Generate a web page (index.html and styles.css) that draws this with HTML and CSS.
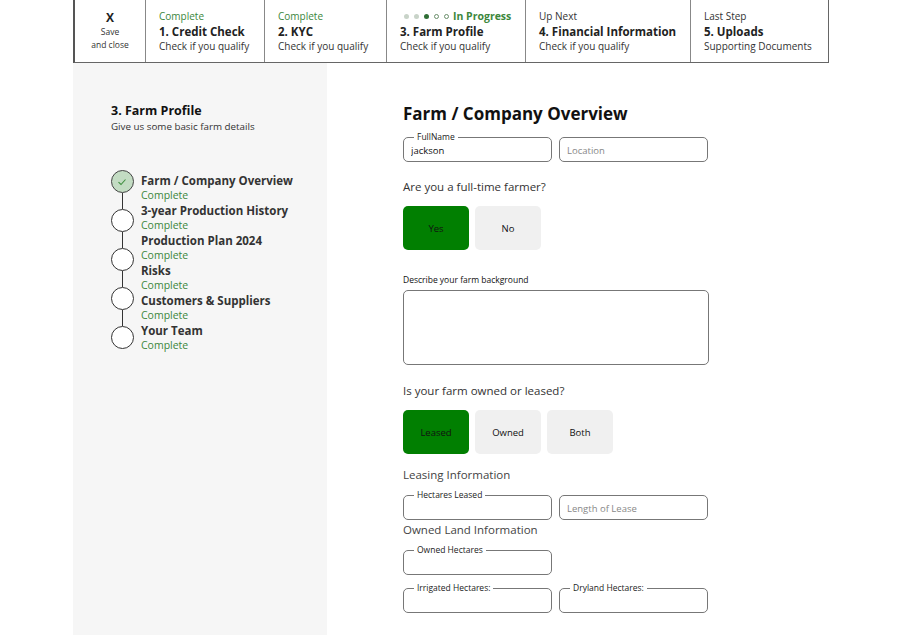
FILE: index.html
```html
<!DOCTYPE html>
<html>
<head>
<meta charset="utf-8">
<link rel="stylesheet" href="styles.css">
</head>
<body>
<div class="page">
  <header class="steps">
    <div class="cell close">
      <div class="x">X</div>
      <div class="save">Save<br>and close</div>
    </div>
    <div class="cell">
      <div class="status done">Complete</div>
      <div class="title">1. Credit Check</div>
      <div class="sub">Check if you qualify</div>
    </div>
    <div class="cell">
      <div class="status done">Complete</div>
      <div class="title">2. KYC</div>
      <div class="sub">Check if you qualify</div>
    </div>
    <div class="cell">
      <div class="status progress">
        <span class="dot light"></span><span class="dot light"></span><span class="dot dark"></span><span class="dot hollow"></span><span class="dot hollow"></span>
        <span class="ptext">In Progress</span>
      </div>
      <div class="title">3. Farm Profile</div>
      <div class="sub">Check if you qualify</div>
    </div>
    <div class="cell">
      <div class="status">Up Next</div>
      <div class="title">4. Financial Information</div>
      <div class="sub">Check if you qualify</div>
    </div>
    <div class="cell">
      <div class="status">Last Step</div>
      <div class="title">5. Uploads</div>
      <div class="sub">Supporting Documents</div>
    </div>
  </header>

  <div class="body">
    <aside class="side">
      <h2 class="side-title">3. Farm Profile</h2>
      <p class="side-sub">Give us some basic farm details</p>
      <div class="tracker">
        <div class="circles">
          <div class="circ checked">
            <svg width="12" height="12" viewBox="0 0 12 12"><path d="M2.5 6.2 L5 8.5 L9.5 3.5" fill="none" stroke="#3f8f3f" stroke-width="1.1"/></svg>
          </div>
          <div class="line"></div>
          <div class="circ"></div>
          <div class="line"></div>
          <div class="circ"></div>
          <div class="line"></div>
          <div class="circ"></div>
          <div class="line"></div>
          <div class="circ"></div>
        </div>
        <ul class="items">
          <li><span class="it">Farm / Company Overview</span><span class="ic">Complete</span></li>
          <li><span class="it">3-year Production History</span><span class="ic">Complete</span></li>
          <li><span class="it">Production Plan 2024</span><span class="ic">Complete</span></li>
          <li><span class="it">Risks</span><span class="ic">Complete</span></li>
          <li><span class="it">Customers &amp; Suppliers</span><span class="ic">Complete</span></li>
          <li><span class="it">Your Team</span><span class="ic">Complete</span></li>
        </ul>
      </div>
    </aside>

    <main class="main">
      <h1 class="main-title">Farm / Company Overview</h1>
      <div class="row">
        <fieldset class="fs"><legend>FullName</legend><input class="in" value="jackson"></fieldset>
        <div class="plain"><input class="in" placeholder="Location"></div>
      </div>

      <p class="q q1">Are you a full-time farmer?</p>
      <div class="btns">
        <button class="opt on">Yes</button>
        <button class="opt">No</button>
      </div>

      <label class="lbl">Describe your farm background</label>
      <textarea class="ta"></textarea>

      <p class="q q2">Is your farm owned or leased?</p>
      <div class="btns">
        <button class="opt on">Leased</button>
        <button class="opt">Owned</button>
        <button class="opt">Both</button>
      </div>

      <p class="sec">Leasing Information</p>
      <div class="row">
        <fieldset class="fs"><legend>Hectares Leased</legend><input class="in"></fieldset>
        <div class="plain"><input class="in" placeholder="Length of Lease"></div>
      </div>

      <p class="sec sec2">Owned Land Information</p>
      <div class="row">
        <fieldset class="fs"><legend>Owned Hectares</legend><input class="in"></fieldset>
      </div>
      <div class="row row-last">
        <fieldset class="fs"><legend>Irrigated Hectares:</legend><input class="in"></fieldset>
        <fieldset class="fs"><legend>Dryland Hectares:</legend><input class="in"></fieldset>
      </div>
    </main>
  </div>
</div>
</body>
</html>
```

FILE: styles.css
```css
* { box-sizing: border-box; }
html, body { margin: 0; padding: 0; background: #fff; }
body {
  font-family: "Open Sans", "Noto Sans", sans-serif;
  color: #222;
}
.page {
  width: 756px;
  margin-left: 73px;
}
.steps {
  display: grid;
  grid-template-columns: 70px 119px 122px 139px 165px 1fr;
  height: 63px;
  border: 1px solid #666;
  border-top: none;
  border-left: 2px solid #555;
}
.cell {
  border-left: 1px solid #888;
  padding: 9px 0 0 13px;
  white-space: nowrap;
}
.cell.close {
  border-left: none;
  padding: 10px 0 0 0;
  text-align: center;
}
.x { font-weight: 700; font-size: 12px; line-height: 15px; }
.save { font-size: 8.5px; line-height: 13px; color: #333; }
.status { font-size: 10px; line-height: 15px; color: #333; height: 15px; }
.status.done { color: #3c873c; }
.title { font-weight: 700; font-size: 11.5px; line-height: 15px; color: #222; }
.sub { font-size: 10px; line-height: 15px; color: #333; }
.progress { display: flex; align-items: center; margin-left: 4px; }
.dot {
  width: 5px; height: 5px; border-radius: 50%;
  margin-right: 5px; display: inline-block;
}
.dot.light { background: #c8d3c8; }
.dot.dark { background: #2f6e35; }
.dot.hollow { border: 1px solid #6a8e6a; background: #fff; }
.ptext { font-weight: 700; color: #3c873c; font-size: 10.5px; margin-left: -1px; }

.body { display: flex; }
.side {
  width: 254px;
  min-height: 572px;
  background: #f6f6f6;
  padding: 40px 0 0 38px;
}
.side-title { margin: 0; font-size: 12.5px; line-height: 16px; font-weight: 700; color: #111; }
.side-sub { margin: 1px 0 0; font-size: 9.8px; line-height: 13px; color: #333; }
.tracker { display: flex; margin-top: 40px; }
.circles { display: flex; flex-direction: column; align-items: center; width: 22px; margin-top: -3px; }
.circ {
  width: 23px; height: 23px; border-radius: 50%;
  border: 1px solid #333; background: #fff;
  display: flex; align-items: center; justify-content: center;
}
.circ.checked { background: #c3dcc3; border-color: #444; }
.line { width: 1px; height: 16px; background: #333; }
.items { list-style: none; margin: 0 0 0 8px; padding: 0; }
.items li { display: flex; flex-direction: column; height: 30px; }
.it { font-weight: 700; font-size: 11.5px; line-height: 15px; color: #333; }
.ic { font-size: 10.5px; line-height: 14px; color: #3c873c; }

.main { padding: 39px 0 0 76px; width: 502px; }
.main-title { margin: 0; font-size: 17px; line-height: 24px; font-weight: 700; color: #111; }
.row { display: flex; gap: 7px; margin-top: 6px; }
.fs {
  margin: 0; padding: 0 7px;
  width: 149px; height: 30px;
  border: 1px solid #777; border-radius: 5px;
  min-width: 0;
}
.fs legend {
  font-size: 8.5px; line-height: 10px; padding: 0 3px; margin-left: 3px; color: #222;
}
.plain {
  width: 149px; height: 25px; margin-top: 5px;
  border: 1px solid #777; border-radius: 5px;
  padding: 0 7px; display: flex; align-items: center;
}
.in {
  border: none; outline: none; background: transparent;
  font-family: inherit; font-size: 9.5px; color: #111;
  width: 100%; padding: 0; height: 16px; margin-top: 0; display: block;
}
.plain .in { margin-top: 1px; }
.in::placeholder { color: #888; }
.q { margin: 17px 0 0; font-size: 11.5px; line-height: 16px; color: #333; }
.btns { display: flex; gap: 6px; margin-top: 11px; }
.opt {
  width: 66px; height: 44px; border: none; border-radius: 5px;
  background: #f0f0f0; font-family: inherit; font-size: 9.5px; color: #111;
}
.opt.on { background: #017f01; color: #111; }
.lbl { display: block; margin-top: 24px; font-size: 8.5px; line-height: 12px; color: #111; }
.ta {
  display: block; width: 306px; height: 75px; margin-top: 4px;
  border: 1px solid #777; border-radius: 5px; resize: none;
}
.q2 { margin-top: 18px; }
.sec { margin: 13px 0 0; font-size: 11.5px; line-height: 16px; color: #444; }
.sec2 { margin-top: 2px; }
.sec + .row { margin-top: 7px; }
.sec2 + .row { margin-top: 7px; }
.row-last { margin-top: 8px; }
```
